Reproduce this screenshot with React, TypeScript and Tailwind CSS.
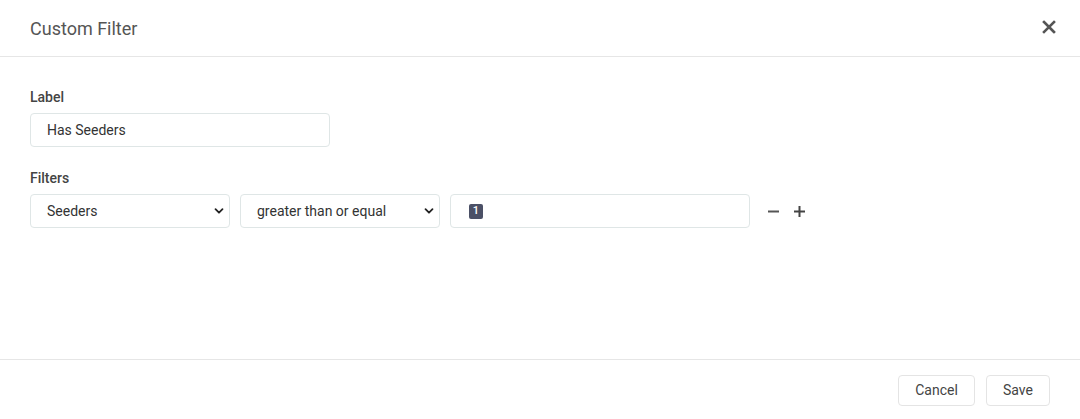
function ChevronDown() {
  return (
    <svg width="10" height="10" viewBox="0 0 10 10" fill="none">
      <path d="M1.5 3.2L5 6.7L8.5 3.2" stroke="#222" strokeWidth="1.8" strokeLinecap="round" strokeLinejoin="round" />
    </svg>
  );
}

function CloseIcon() {
  return (
    <svg width="14" height="14" viewBox="0 0 14 14" fill="none">
      <path d="M2 2L12 12M12 2L2 12" stroke="#555" strokeWidth="2.6" strokeLinecap="square" />
    </svg>
  );
}

function Select({ value, width }: { value: string; width: string }) {
  return (
    <div className={`relative ${width}`}>
      <select
        defaultValue={value}
        className="h-[34px] w-full appearance-none rounded-[4px] border border-[#dfe6e6] bg-white pl-4 pr-8 text-[14px] text-[#333] outline-none"
      >
        <option>{value}</option>
      </select>
      <span className="pointer-events-none absolute right-[6px] top-[12px]">
        <ChevronDown />
      </span>
    </div>
  );
}

export default function App() {
  return (
    <div
      className="flex h-[419px] w-[1080px] flex-col bg-white"
      style={{ fontFamily: "Roboto, 'Liberation Sans', sans-serif" }}
    >
      <div className="flex h-[57px] items-center justify-between border-b border-[#e6e6e6] pl-[30px] pr-[24px]">
        <h2 className="text-[18px] text-[#555]">Custom Filter</h2>
        <button className="mt-[-2px]">
          <CloseIcon />
        </button>
      </div>

      <div className="flex-1 px-[30px] pt-[32px]">
        <label className="mb-[7px] block text-[14px] font-medium leading-[17px] text-[#444]">Label</label>
        <input
          defaultValue="Has Seeders"
          className="h-[34px] w-[300px] rounded-[4px] border border-[#dfe6e6] pl-4 text-[14px] text-[#333] outline-none"
        />

        <label className="mb-[7px] mt-[23px] block text-[14px] font-medium leading-[17px] text-[#444]">Filters</label>
        <div className="flex items-center gap-[10px]">
          <Select value="Seeders" width="w-[200px]" />
          <Select value="greater than or equal" width="w-[200px]" />
          <div className="flex h-[34px] w-[300px] items-center rounded-[4px] border border-[#dfe6e6] pl-[18px]">
            <span className="flex h-[15px] w-[14px] items-center justify-center rounded-[2px] bg-[#4b5066] text-[11px] font-medium text-white">
              1
            </span>
          </div>
          <div className="ml-[8px] flex items-center gap-[15px]">
            <svg width="11" height="11" viewBox="0 0 11 11">
              <path d="M0 5.5H11" stroke="#555" strokeWidth="2" />
            </svg>
            <svg width="11" height="11" viewBox="0 0 11 11">
              <path d="M0 5.5H11M5.5 0V11" stroke="#444" strokeWidth="2" />
            </svg>
          </div>
        </div>
      </div>

      <div className="flex h-[60px] items-start justify-end gap-[11px] border-t border-[#e6e6e6] pr-[30px] pt-[15px]">
        <button className="h-[31px] w-[77px] rounded-[4px] border border-[#e4e4e4] text-[14px] text-[#444]">Cancel</button>
        <button className="h-[31px] w-[64px] rounded-[4px] border border-[#e4e4e4] text-[14px] text-[#444]">Save</button>
      </div>
    </div>
  );
}
